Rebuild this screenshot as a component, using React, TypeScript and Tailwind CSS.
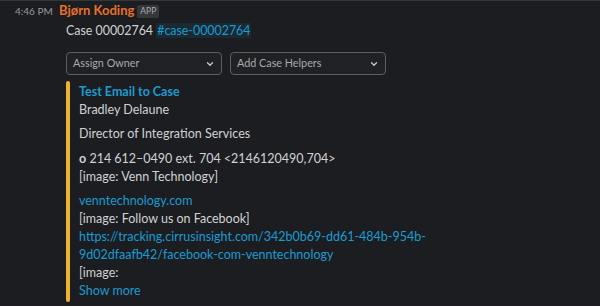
import { ChevronDown } from "lucide-react";

const lato = { fontFamily: "Lato, 'Noto Sans', sans-serif" };

function Select({ label }: { label: string }) {
  return (
    <div className="w-[156px] h-[23px] border border-[#5d5e61] rounded-[4px] flex items-center justify-between pl-[6px] pr-[6px] bg-[#1f2124]">
      <span className="text-[10.8px] text-[#a9aaac]">{label}</span>
      <ChevronDown className="w-[10px] h-[10px] text-[#c9cacc]" strokeWidth={3} />
    </div>
  );
}

export default function App() {
  return (
    <div
      className="w-[600px] h-[306px] bg-[#1b1d21] border-t border-[#34363a] text-[#d1d2d3] overflow-hidden"
      style={lato}
    >
      <div className="flex items-center h-[20px]">
        <span className="w-[59px] pl-[15px] text-[10px] text-[#9a9b9d]">4:46 PM</span>
        <span className="text-[13px] font-bold text-[#e8702c]">Bjørn Koding</span>
        <span className="ml-[3px] px-[3px] rounded-[2px] bg-[#35373b] text-[8.5px] text-[#a9aaac] leading-[13px]">APP</span>
      </div>
      <div className="pl-[66px]">
        <div className="text-[12.4px] leading-[16px] mt-[2px]">
          Case 00002764{" "}
          <span className="text-[#1d9bd1] bg-[#1d9bd1]/10 rounded-[2px] px-[1px]">#case-00002764</span>
        </div>
        <div className="flex gap-[8px] mt-[13px]">
          <Select label="Assign Owner" />
          <Select label="Add Case Helpers" />
        </div>
        <div className="flex mt-[6px]">
          <div className="w-[4px] rounded-[2px] bg-[#ecb22e] h-[221px] shrink-0" />
          <div className="pl-[9px] text-[12.5px] leading-[18px] pt-[2px] whitespace-nowrap">
            <div className="font-bold text-[#1d9bd1]">Test Email to Case</div>
            <div>Bradley Delaune</div>
            <div className="mt-[6px]">Director of Integration Services</div>
            <div className="mt-[7px]">
              <span className="font-bold">o</span> 214 612–0490 ext. 704 &lt;2146120490,704&gt;
            </div>
            <div>[image: Venn Technology]</div>
            <div className="mt-[6px] text-[#1d9bd1]">venntechnology.com</div>
            <div>[image: Follow us on Facebook]</div>
            <div className="text-[#1d9bd1]">
              https://tracking.cirrusinsight.com/342b0b69-dd61-484b-954b-
              <br />
              9d02dfaafb42/facebook-com-venntechnology
            </div>
            <div>[image:</div>
            <div className="text-[#1d9bd1]">Show more</div>
          </div>
        </div>
      </div>
    </div>
  );
}
